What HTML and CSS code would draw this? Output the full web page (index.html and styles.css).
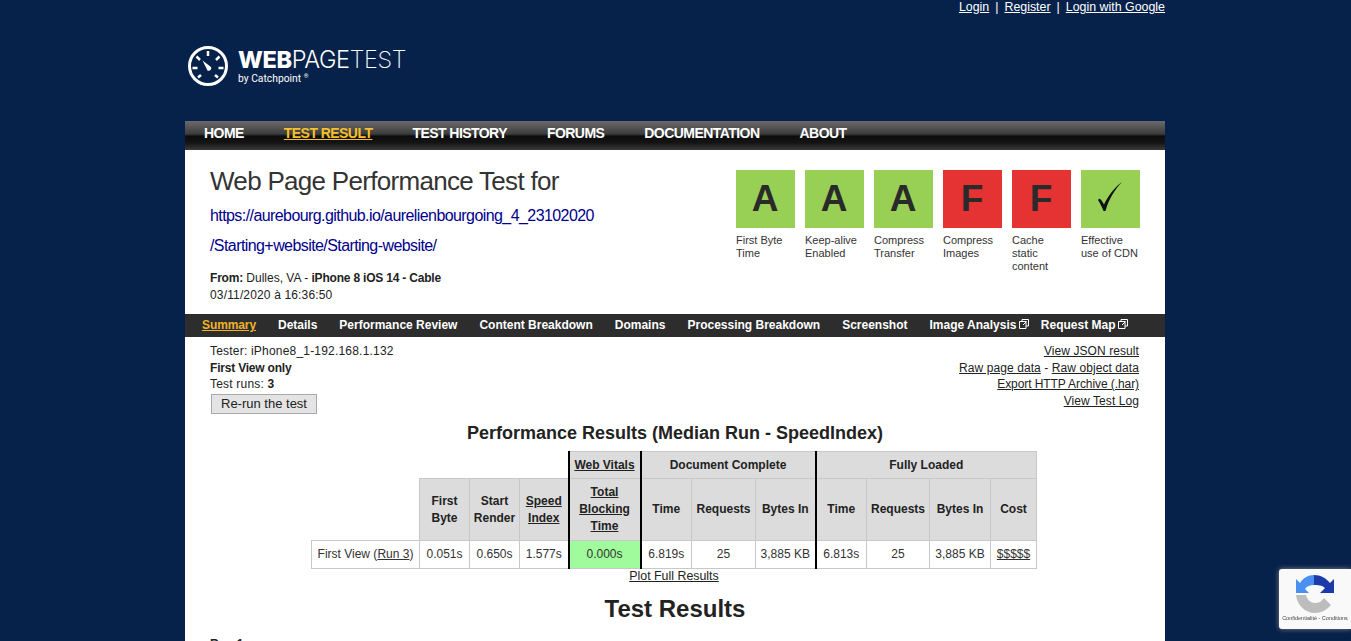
FILE: index.html
```html
<!DOCTYPE html>
<html lang="en">
<head>
    <meta charset="UTF-8">
    <meta name="viewport" content="width=device-width, initial-scale=1.0">
    <title>WebPageTest Test Result</title>
    <link rel="stylesheet" href="styles.css">
</head>
<body>
    <div class="page">
        <div class="account">
            <a href="#">Login</a><span>|</span><a href="#">Register</a><span>|</span><a href="#">Login with Google</a>
        </div>

        <div class="logo">
            <svg class="gauge" width="42" height="42" viewBox="0 0 42 42">
                <circle cx="21" cy="21" r="18.5" fill="none" stroke="#fff" stroke-width="3"/>
                <path d="M21 6v5M9.500 11.500l3.500 3.500M32.500 11.500L29 15M5.500 23h5M31.500 23h5M11 32.500l3-2.500M31 32.500l-3-2.500" stroke="#fff" stroke-width="2.500" fill="none"/>
                <path d="M15.500 15.500l8.500 6.500a2.600 2.600 0 0 1-3.500 3.500z" fill="#fff"/>
            </svg>
            <div>
                <div class="logo-name"><b>WEB</b><span class="page-word">PAGE</span><span class="test-word">TEST</span></div>
                <div class="logo-by">by Catchpoint <sup>®</sup></div>
            </div>
        </div>

        <nav class="main-nav">
            <a href="#">Home</a>
            <a href="#" class="current">Test Result</a>
            <a href="#">Test History</a>
            <a href="#">Forums</a>
            <a href="#">Documentation</a>
            <a href="#">About</a>
        </nav>

        <div class="box">
            <div class="header">
                <div class="header-info">
                    <h2>Web Page Performance Test for</h2>
                    <a class="test-url" href="#">https://aurebourg.github.io/aurelienbourgoing_4_23102020<br>/Starting+website/Starting-website/</a>
                    <p class="from"><b>From:</b> Dulles, VA - <b>iPhone 8 iOS 14 - Cable</b><br><span class="date">03/11/2020 à 16:36:50</span></p>
                </div>
                <div class="grades">
                    <div class="grade"><div class="square green">A</div>First Byte Time</div>
                    <div class="grade"><div class="square green">A</div>Keep-alive Enabled</div>
                    <div class="grade"><div class="square green">A</div>Compress Transfer</div>
                    <div class="grade"><div class="square red">F</div>Compress Images</div>
                    <div class="grade"><div class="square red">F</div>Cache static content</div>
                    <div class="grade">
                        <div class="square green">
                            <svg class="check" width="30" height="32" viewBox="0 0 30 32"><path d="M3 19l1.500-1.500c1.500 1 3 3 4.500 6C13 15 19 7 27 1 19.500 9 13.500 18.500 10.500 30H8.500C7 26 5 22 3 19z" fill="#111"/></svg>
                        </div>
                        Effective use of CDN
                    </div>
                </div>
            </div>

            <nav class="sub-nav">
                <a href="#" class="current">Summary</a>
                <a href="#">Details</a>
                <a href="#">Performance Review</a>
                <a href="#">Content Breakdown</a>
                <a href="#">Domains</a>
                <a href="#">Processing Breakdown</a>
                <a href="#">Screenshot</a>
                <a href="#">Image Analysis <svg class="ext" width="10" height="10" viewBox="0 0 10 10"><path d="M.5 2.500h6.500v7H.5zM3 2.500V.5h6.500v6.500H7M4 6l3.500-3.500" fill="none" stroke="#fff"/></svg></a>
                <a href="#">Request Map <svg class="ext" width="10" height="10" viewBox="0 0 10 10"><path d="M.5 2.500h6.500v7H.5zM3 2.500V.5h6.500v6.500H7M4 6l3.500-3.500" fill="none" stroke="#fff"/></svg></a>
            </nav>

            <div class="meta">
                <div class="meta-left">
                    Tester: iPhone8_1-192.168.1.132<br>
                    <b>First View only</b><br>
                    Test runs: <b>3</b><br>
                    <button class="rerun">Re-run the test</button>
                </div>
                <div class="meta-right">
                    <a href="#">View JSON result</a><br>
                    <a href="#">Raw page data</a> - <a href="#">Raw object data</a><br>
                    <a href="#" class="har">Export HTTP Archive (.har)</a><br>
                    <a href="#">View Test Log</a>
                </div>
            </div>

            <h3 class="results-title">Performance Results (Median Run - SpeedIndex)</h3>

            <table class="results">
                <colgroup>
                    <col class="c-108"><col class="c-50"><col class="c-50"><col class="c-49"><col class="c-72">
                    <col class="c-51"><col class="c-64"><col class="c-60">
                    <col class="c-51"><col class="c-63"><col class="c-61"><col class="c-46">
                </colgroup>
                <tr class="group-row">
                    <th class="empty" colspan="4"></th>
                    <th class="thick"><a href="#">Web Vitals</a></th>
                    <th class="thick-left" colspan="3">Document Complete</th>
                    <th class="thick-left" colspan="4">Fully Loaded</th>
                </tr>
                <tr class="head-row">
                    <th class="empty"></th>
                    <th>First<br>Byte</th>
                    <th>Start<br>Render</th>
                    <th><a href="#">Speed<br>Index</a></th>
                    <th class="thick"><a href="#">Total<br>Blocking<br>Time</a></th>
                    <th class="thick-left">Time</th>
                    <th>Requests</th>
                    <th>Bytes In</th>
                    <th class="thick-left">Time</th>
                    <th>Requests</th>
                    <th>Bytes In</th>
                    <th>Cost</th>
                </tr>
                <tr class="data-row">
                    <td>First View (<a href="#">Run 3</a>)</td>
                    <td>0.051s</td>
                    <td>0.650s</td>
                    <td>1.577s</td>
                    <td class="thick good">0.000s</td>
                    <td class="thick-left">6.819s</td>
                    <td>25</td>
                    <td>3,885 KB</td>
                    <td class="thick-left">6.813s</td>
                    <td>25</td>
                    <td>3,885 KB</td>
                    <td><a href="#">$$$$$</a></td>
                </tr>
            </table>

            <div class="plot"><a href="#">Plot Full Results</a></div>
            <h2 class="test-results">Test Results</h2>
            <p class="run-label"><b>Run 1</b></p>
        </div>
    </div>

    <div class="recaptcha">
        <svg width="38" height="38" viewBox="0 0 38 38">
            <path d="M18 0C25 0 30 3 34 8L38 4V18H24L29 13C26 10 22 10 18 10z" fill="#1c3aa9"/>
            <path d="M18 0C12 0 7 3 4 8L0 4V18H13L9 14C11 11 14 10 18 10z" fill="#4a90f0"/>
            <path d="M0 20H10C11 25 15 28 19 28 23 28 26 26 28 23L35 30C31 35 25 38 19 38 9 38 1 30 0 20z" fill="#bdbdbd"/>
        </svg>
        <div class="recaptcha-text">Confidentialité - Conditions</div>
    </div>
</body>
</html>
```

FILE: styles.css
```css
html, body {
    margin: 0;
    height: 641px;
    overflow: hidden;
}
body {
    font-family: "Liberation Sans", Arial, sans-serif;
    font-size: 12px;
    color: #222;
    background-color: #07224a;
}
a {
    color: inherit;
}
.page {
    width: 980px;
    margin-left: 185px;
}

/* top of page */
.account {
    display: flex;
    justify-content: flex-end;
    gap: 6px;
    height: 14px;
    line-height: 14px;
    color: #fff;
    font-size: 12.400px;
}
.logo {
    display: flex;
    align-items: center;
    gap: 8px;
    height: 107px;
    padding-left: 2px;
    padding-bottom: 14px;
    box-sizing: border-box;
    color: #fff;
}
.gauge {
    margin-top: 11px;
}
.logo-name {
    font-family: Inter, "Liberation Sans", sans-serif;
    font-size: 23.500px;
    line-height: 26px;
    margin-top: 10px;
    margin-left: 1px;
    letter-spacing: -0.4px;
}
.logo-name b {
    font-weight: 800;
}
.page-word {
    font-weight: 300;
}
.test-word {
    font-weight: 200;
}
.logo-by {
    font-family: Roboto, sans-serif;
    font-size: 10.300px;
    line-height: 12px;
    margin-left: 1px;
}
.logo-by sup {
    font-size: 6px;
    line-height: 0;
}

/* main navigation */
.main-nav {
    display: flex;
    gap: 40px;
    height: 29px;
    padding-left: 19px;
    line-height: 25px;
    background: linear-gradient(#6b6b6b 0, #3c3c3c 45%, #0c0c0c 52%, #141414 75%, #3a3a3a 100%);
}
.main-nav a {
    color: #fff;
    font-size: 14px;
    font-weight: bold;
    text-transform: uppercase;
    text-decoration: none;
    letter-spacing: -0.55px;
}
.main-nav a.current {
    color: #f5c02c;
    text-decoration: underline;
}

.box {
    background: #fff;
    height: 500px;
}

/* test header */
.header {
    display: flex;
    justify-content: space-between;
    height: 164px;
}
.header-info {
    padding-left: 25px;
}
.header-info h2 {
    margin: 13px 0 0;
    font-size: 26px;
    font-weight: normal;
    line-height: 36px;
    color: #333;
    letter-spacing: -0.7px;
}
.test-url {
    display: block;
    margin-top: 2px;
    font-size: 16px;
    line-height: 30px;
    color: #00008b;
    text-decoration: none;
    letter-spacing: -0.58px;
}
.from {
    margin: 9px 0 0;
    line-height: 17px;
}
.from b {
    letter-spacing: -0.2px;
}
.date {
    letter-spacing: 0.15px;
}
.grades {
    display: flex;
    gap: 10px;
    padding-top: 20px;
    padding-right: 25px;
}
.grade {
    width: 59px;
    line-height: 13px;
    font-size: 11px;
    color: #333;
}
.square {
    display: flex;
    align-items: center;
    justify-content: center;
    box-sizing: border-box;
    height: 58px;
    padding: 0 1px 2px 0;
    margin-bottom: 6px;
    font-size: 37px;
    font-weight: bold;
    color: #2a2a2a;
}
.check {
    margin-top: -3px;
}
.green {
    background-color: #98d055;
}
.red {
    background-color: #e53333;
}

/* sub navigation */
.sub-nav {
    display: flex;
    gap: 22px;
    height: 23px;
    padding-left: 17px;
    line-height: 22px;
    background-color: #2d2d2d;
}
.sub-nav a {
    color: #fff;
    font-weight: bold;
    text-decoration: none;
    white-space: nowrap;
}
.sub-nav a.current {
    color: #f0b429;
    text-decoration: underline;
    letter-spacing: -0.1px;
}
.ext {
    margin-left: -1px;
    margin-right: -10px;
}

/* tester info and links */
.meta {
    display: flex;
    justify-content: space-between;
    height: 79px;
    padding: 6px 26px 0 25px;
    line-height: 16.600px;
}
.meta-left {
    letter-spacing: 0.2px;
}
.meta-left b {
    letter-spacing: -0.2px;
}
.meta-right {
    text-align: right;
    letter-spacing: 0.08px;
}
.meta-right .har {
    letter-spacing: -0.08px;
}
.rerun {
    width: 106px;
    height: 20px;
    margin: 1px 0 0 1px;
    padding: 0;
    font-family: inherit;
    font-size: 13px;
    color: #222;
    background-color: #e4e4e4;
    border: 1px solid #aaa;
}

.results-title {
    margin: 0;
    text-align: center;
    font-size: 18px;
    line-height: 22px;
    color: #222;
}

/* results table */
.results {
    margin: 7px 0 0 126px;
    border-collapse: collapse;
    table-layout: fixed;
    width: 725px;
    text-align: center;
}
.c-108 { width: 108px; }
.c-72 { width: 72px; }
.c-64 { width: 64px; }
.c-63 { width: 63px; }
.c-61 { width: 61px; }
.c-60 { width: 60px; }
.c-51 { width: 51px; }
.c-50 { width: 50px; }
.c-49 { width: 49px; }
.c-46 { width: 46px; }
.results th, .results td {
    border: 1px solid #c8c8c8;
    padding: 0;
    line-height: 17px;
    color: #333;
}
.results th {
    background-color: #dcdcdc;
    color: #222;
}
.results th.empty {
    background: none;
    border-top: none;
    border-left: none;
}
.group-row th.empty {
    border-right: none;
    border-bottom: none;
}
.group-row {
    height: 27px;
}
.head-row {
    height: 62px;
}
.data-row {
    height: 28px;
}
.results .thick {
    border-left: 2px solid #000;
    border-right: 2px solid #000;
}
.results .thick-left {
    border-left: 2px solid #000;
}
.results .good {
    background-color: #a0fb9c;
}

.plot {
    font-size: 12.400px;
    text-align: center;
    line-height: 15px;
    padding-right: 2px;
}
.test-results {
    margin: 9px 0 0;
    text-align: center;
    font-size: 24px;
    line-height: 32px;
    color: #222;
}
.run-label {
    margin: 12px 0 0 25px;
}

/* recaptcha badge */
.recaptcha {
    position: fixed;
    right: 0;
    top: 569px;
    width: 72px;
    height: 60px;
    box-sizing: border-box;
    padding-top: 6px;
    text-align: center;
    background-color: #f9f9f9;
    border-radius: 3px 0 0 3px;
    box-shadow: 0 0 5px #888;
}
.recaptcha svg {
    display: block;
    margin: 0 auto;
}
.recaptcha-text {
    margin-top: 2px;
    font-size: 5.500px;
    line-height: 6px;
    color: #444;
    white-space: nowrap;
}
```
